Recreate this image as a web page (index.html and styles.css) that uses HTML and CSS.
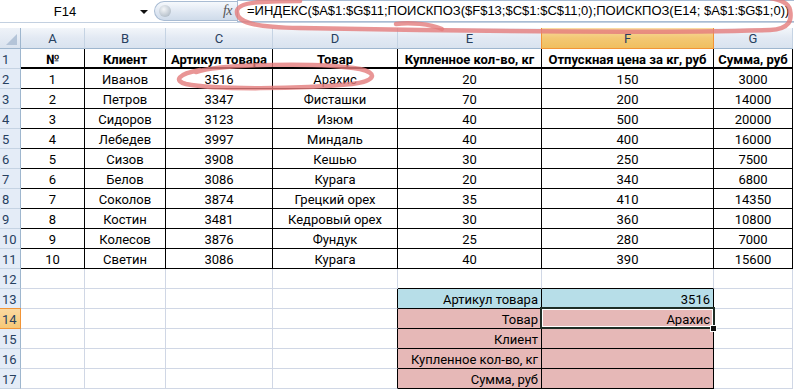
FILE: index.html
```html
<!DOCTYPE html>
<html lang="ru">
<head>
<meta charset="utf-8">
<title>Excel</title>
<link rel="stylesheet" href="styles.css">
</head>
<body>
<div class="app">
  <div class="fbar">
    <div class="namebox"><span class="nb-text">F14</span><span class="nb-arrow"></span></div>
    <div class="pill"><span class="knob"></span><span class="fx">fx</span></div>
    <div class="formula">=ИНДЕКС($A$1:$G$11;ПОИСКПОЗ($F$13;$C$1:$C$11;0);ПОИСКПОЗ(E14; $A$1:$G$1;0))</div>
  </div>
  <div class="gap"></div>
  <div class="sheet">
    <div class="corner"><span class="tri"></span></div>
    <div class="ch">A</div><div class="ch">B</div><div class="ch">C</div><div class="ch">D</div><div class="ch">E</div><div class="ch sel">F</div><div class="ch">G</div>

    <div class="rh">1</div>
    <div class="c t hd">№</div><div class="c t hd">Клиент</div><div class="c t hd">Артикул товара</div><div class="c t hd">Товар</div><div class="c t hd">Купленное кол-во, кг</div><div class="c t hd">Отпускная цена за кг, руб</div><div class="c t hd">Сумма, руб</div>

    <div class="rh">2</div>
    <div class="c t">1</div><div class="c t">Иванов</div><div class="c t">3516</div><div class="c t">Арахис</div><div class="c t">20</div><div class="c t">150</div><div class="c t">3000</div>
    <div class="rh">3</div>
    <div class="c t">2</div><div class="c t">Петров</div><div class="c t">3347</div><div class="c t">Фисташки</div><div class="c t">70</div><div class="c t">200</div><div class="c t">14000</div>
    <div class="rh">4</div>
    <div class="c t">3</div><div class="c t">Сидоров</div><div class="c t">3123</div><div class="c t">Изюм</div><div class="c t">40</div><div class="c t">500</div><div class="c t">20000</div>
    <div class="rh">5</div>
    <div class="c t">4</div><div class="c t">Лебедев</div><div class="c t">3997</div><div class="c t">Миндаль</div><div class="c t">40</div><div class="c t">400</div><div class="c t">16000</div>
    <div class="rh">6</div>
    <div class="c t">5</div><div class="c t">Сизов</div><div class="c t">3908</div><div class="c t">Кешью</div><div class="c t">30</div><div class="c t">250</div><div class="c t">7500</div>
    <div class="rh">7</div>
    <div class="c t">6</div><div class="c t">Белов</div><div class="c t">3086</div><div class="c t">Курага</div><div class="c t">20</div><div class="c t">340</div><div class="c t">6800</div>
    <div class="rh">8</div>
    <div class="c t">7</div><div class="c t">Соколов</div><div class="c t">3874</div><div class="c t">Грецкий орех</div><div class="c t">35</div><div class="c t">410</div><div class="c t">14350</div>
    <div class="rh">9</div>
    <div class="c t">8</div><div class="c t">Костин</div><div class="c t">3481</div><div class="c t">Кедровый орех</div><div class="c t">30</div><div class="c t">360</div><div class="c t">10800</div>
    <div class="rh">10</div>
    <div class="c t">9</div><div class="c t">Колесов</div><div class="c t">3876</div><div class="c t">Фундук</div><div class="c t">25</div><div class="c t">280</div><div class="c t">7000</div>
    <div class="rh">11</div>
    <div class="c t">10</div><div class="c t">Светин</div><div class="c t">3086</div><div class="c t">Курага</div><div class="c t">40</div><div class="c t">390</div><div class="c t">15600</div>

    <div class="rh">12</div>
    <div class="c"></div><div class="c"></div><div class="c"></div><div class="c"></div><div class="c tb"></div><div class="c tb"></div><div class="c"></div>
    <div class="rh">13</div>
    <div class="c"></div><div class="c"></div><div class="c"></div><div class="c tr"></div><div class="c t r blue">Артикул товара</div><div class="c t r blue">3516</div><div class="c"></div>
    <div class="rh sel">14</div>
    <div class="c"></div><div class="c"></div><div class="c"></div><div class="c tr"></div><div class="c t r pink">Товар</div><div class="c t r pink active">Арахис<span class="selbox"></span><span class="handle"></span></div><div class="c"></div>
    <div class="rh">15</div>
    <div class="c"></div><div class="c"></div><div class="c"></div><div class="c tr"></div><div class="c t r pink">Клиент</div><div class="c t r pink"></div><div class="c"></div>
    <div class="rh">16</div>
    <div class="c"></div><div class="c"></div><div class="c"></div><div class="c tr"></div><div class="c t r pink">Купленное кол-во, кг</div><div class="c t r pink"></div><div class="c"></div>
    <div class="rh">17</div>
    <div class="c"></div><div class="c"></div><div class="c"></div><div class="c tr"></div><div class="c t r pink">Сумма, руб</div><div class="c t r pink"></div><div class="c"></div>
  </div>

  <svg class="marks" width="794" height="389" viewBox="0 0 794 389">
    <path d="M300 1 C262 1 238 2 237 11 C236 22 252 27 300 28 L420 30 C560 32 700 32 770 30 C790 29 792 20 790 10 C789 4 782 0 770 -2" />
    <path d="M396 24 C410 22 430 24 442 29" />
    <path d="M196 72 C220 64 320 62 360 69 C378 73 376 81 352 84 C300 89 215 90 186 84 C174 81 177 74 200 70" />
  </svg>
</div>
</body>
</html>
```

FILE: styles.css
```css
html, body {
  margin: 0;
  padding: 0;
  background: #ffffff;
}

.app {
  position: relative;
  width: 794px;
  height: 389px;
  overflow: hidden;
  font-family: Roboto, "Liberation Sans", sans-serif;
}

/* formula bar */
.fbar {
  display: flex;
  height: 22px;
  border-bottom: 1px solid #c3d0e0;
  background: #ffffff;
}

.namebox {
  width: 154px;
  display: flex;
  align-items: center;
  position: relative;
}

.nb-text {
  font-family: "Liberation Sans", Arial, sans-serif;
  font-size: 13px;
  color: #000;
  width: 130px;
  text-align: center;
}

.nb-arrow {
  width: 0;
  height: 0;
  border-left: 4px solid transparent;
  border-right: 4px solid transparent;
  border-top: 4px solid #111;
  margin-left: 10px;
  margin-top: 2px;
}

.pill {
  width: 83px;
  height: 20px;
  margin-top: 1px;
  box-sizing: border-box;
  border: 1px solid #a9bcd3;
  border-right: none;
  border-radius: 11px 0 0 11px;
  background: linear-gradient(#f6f9fc, #dfe7f2 55%, #cfdbea);
  display: flex;
  align-items: center;
  justify-content: space-between;
  padding: 0 5px 0 4px;
}

.knob {
  width: 12px;
  height: 12px;
  border-radius: 50%;
  background: radial-gradient(circle at 40% 35%, #f4f6f8, #b9c3cd 70%, #8f9cab);
}

.fx {
  font-family: "Liberation Serif", serif;
  font-style: italic;
  font-size: 14px;
  color: #555;
  letter-spacing: -0.5px;
}

.formula {
  flex: 1;
  box-sizing: border-box;
  height: 22px;
  border: 1px solid #a9bcd3;
  border-right: none;
  padding-left: 9px;
  font-family: "Liberation Sans", Arial, sans-serif;
  font-size: 13px;
  line-height: 20px;
  color: #000;
  white-space: nowrap;
}

.gap {
  height: 5px;
}

/* sheet grid */
.sheet {
  display: grid;
  grid-template-columns: 21px 64px 81px 107px 125px 144px 172px 79px;
  grid-template-rows: 21px;
  grid-auto-rows: 20px;
}

.sheet > div {
  box-sizing: border-box;
  display: flex;
  align-items: center;
  justify-content: center;
  font-size: 13px;
  color: #000;
  white-space: nowrap;
  padding-top: 1px;
}

.corner {
  position: relative;
  background: linear-gradient(#eef2f8, #dae3ef);
  border-right: 1px solid #9eb6ce;
  border-bottom: 1px solid #9eb6ce;
}

.tri {
  position: absolute;
  right: 3px;
  bottom: 3px;
  width: 0;
  height: 0;
  border-left: 11px solid transparent;
  border-bottom: 11px solid #b4c4d8;
}

.ch {
  background: linear-gradient(#f3f6fa, #e2e9f3 50%, #d9e3ef);
  border-right: 1px solid #c5d3e3;
  border-bottom: 1px solid #9eb6ce;
  color: #27405f !important;
}

.ch.sel {
  background: linear-gradient(#f9dca4, #f3c874 50%, #f0bf5f);
  border-left: 1px solid #f29436;
  border-right: 1px solid #f29436;
  border-bottom: 1px solid #f29436;
  margin-left: -1px;
}

.rh {
  background: #e4ecf7;
  border-right: 1px solid #9eb6ce;
  border-bottom: 1px solid #c5d3e3;
  color: #27405f !important;
  justify-content: flex-start !important;
  padding-left: 2px;
}

.rh.sel {
  background: linear-gradient(#fbd9a0, #f6c877);
  border-right: 1px solid #f29436;
  border-bottom: 1px solid #f29436;
  border-top: 1px solid #f29436;
  margin-top: -1px;
}

.c {
  border-right: 1px solid #d0d7e5;
  border-bottom: 1px solid #d0d7e5;
}

.c.t {
  border-right: 1px solid #000;
  border-bottom: 1px solid #000;
}

.c.tb {
  border-bottom: 1px solid #000;
}

.c.tr {
  border-right: 1px solid #000;
}

.hd {
  font-weight: 700;
}

.sheet > .c.hd {
  border-bottom: 2px solid #000;
  padding-top: 2px;
}

.sheet > .r {
  justify-content: flex-end;
  padding-right: 3px;
}

.blue {
  background: #b7dee8;
}

.pink {
  background: #e6b8b7;
}

.active {
  position: relative;
}

.selbox {
  position: absolute;
  left: -2px;
  top: -2px;
  right: -2px;
  bottom: -1px;
  border: 2px solid #1f2d25;
  box-shadow: inset 0 0 0 1px #ffffff;
}

.handle {
  position: absolute;
  right: -4px;
  bottom: -4px;
  width: 5px;
  height: 5px;
  background: #111;
  border: 1px solid #fff;
}

/* hand-drawn annotations */
.marks {
  position: absolute;
  left: 0;
  top: 0;
  pointer-events: none;
}

.marks path {
  fill: none;
  stroke: #e47c7c;
  stroke-opacity: 0.8;
  stroke-width: 4.5;
  stroke-linecap: round;
  stroke-linejoin: round;
}
```
